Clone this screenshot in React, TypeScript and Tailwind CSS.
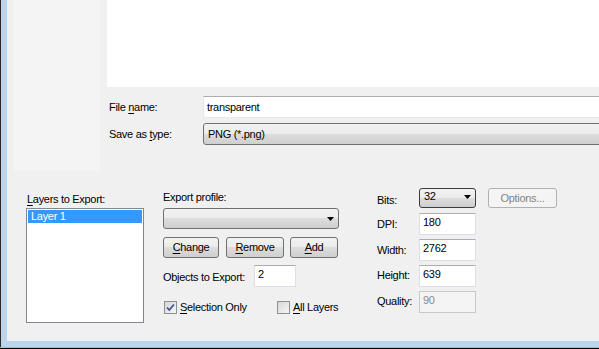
import React from "react";

const btnBg =
  "bg-[linear-gradient(#f2f2f2_0%,#ebebeb_50%,#dddddd_50%,#cfcfcf_100%)]";

function Arrow() {
  return (
    <svg width="7" height="4" viewBox="0 0 7 4" className="block">
      <path d="M0 0H7L3.5 4Z" fill="#000" />
    </svg>
  );
}

function U({ children }: { children: React.ReactNode }) {
  return <span className="underline underline-offset-[2px]">{children}</span>;
}

function Check({ checked }: { checked: boolean }) {
  return (
    <div className="w-[13px] h-[13px] border border-[#8e8f8f] bg-[linear-gradient(135deg,#d6d6d6_0%,#f6f6f6_100%)] flex items-center justify-center shrink-0">
      {checked && (
        <svg width="9" height="9" viewBox="0 0 9 9">
          <path d="M1 4.5L3.3 7L8 1.5" stroke="#3d5590" strokeWidth="1.8" fill="none" />
        </svg>
      )}
    </div>
  );
}

function TextBox({ value, w, disabled }: { value: string; w: string; disabled?: boolean }) {
  return (
    <div
      className={`${w} h-[22px] border ${
        disabled
          ? "border-[#c9c9c9] bg-[#f4f4f4] text-[#8a8a8a]"
          : "border-[#dcdfe6] border-t-[#abadb3] bg-white text-black"
      } pl-[3px] pt-[2px]`}
    >
      {value}
    </div>
  );
}

export default function App() {
  return (
    <div className="w-[599px] h-[349px] flex flex-col bg-[#f0f0f0] overflow-hidden font-['Liberation_Sans',Arial,sans-serif] text-[11px] leading-[13px] tracking-[-0.3px] text-black">
      <div className="flex flex-1 min-h-0">
        <div className="w-px bg-[#2a2a2a]" />
        <div className="w-[6px] bg-[#bcd4ec]" />
        <div className="flex-1 flex flex-col min-w-0">
          {/* top section */}
          <div className="h-[171px] flex">
            <div className="w-[7px]" />
            <div className="w-[86px] bg-[#f4f4f4]" />
            <div className="w-[7px]" />
            <div className="flex-1 flex flex-col min-w-0">
              <div className="h-[87px] bg-white" />
              <div className="mt-[9px] h-[22px] flex items-center">
                <div className="w-[96px] pl-[2px] shrink-0">
                  File <U>n</U>ame:
                </div>
                <div className="flex-1 h-[22px] -mr-[4px] border border-[#e3e9ef] border-t-[#abadb3] bg-white pl-[3px] flex items-center">
                  transparent
                </div>
              </div>
              <div className="mt-[5px] h-[22px] flex items-center">
                <div className="w-[96px] pl-[2px] shrink-0">
                  Save as <U>t</U>ype:
                </div>
                <div className={`flex-1 h-[22px] -mr-[4px] border border-[#707070] rounded-[3px] ${btnBg} pl-[4px] flex items-center`}>
                  PNG (*.png)
                </div>
              </div>
            </div>
          </div>

          {/* lower section */}
          <div className="flex items-start pl-[19px]">
            {/* col1 */}
            <div className="w-[118px] pt-[22px] shrink-0">
              <div className="h-[13px] pl-px">
                <U>L</U>ayers to Export:
              </div>
              <div className="mt-[2px] h-[115px] border border-[#828790] bg-white p-px">
                <div className="h-[13px] bg-[#3399ff] text-white pl-[3px]">Layer 1</div>
              </div>
            </div>

            {/* col2 */}
            <div className="ml-[19px] w-[176px] pt-[20px] shrink-0">
              <div className="h-[13px]">Export profile:</div>
              <div className={`mt-[4px] h-[21px] border border-[#707070] rounded-[3px] ${btnBg} flex items-center justify-end pr-[4px]`}>
                <Arrow />
              </div>
              <div className="mt-[8px] flex">
                <div className={`w-[56px] h-[21px] border border-[#707070] rounded-[3px] ${btnBg} flex items-center justify-center`}>
                  <span><U>C</U>hange</span>
                </div>
                <div className={`ml-[7px] w-[58px] h-[21px] border border-[#707070] rounded-[3px] ${btnBg} flex items-center justify-center`}>
                  <span><U>R</U>emove</span>
                </div>
                <div className={`ml-[6px] w-[48px] h-[21px] border border-[#707070] rounded-[3px] ${btnBg} flex items-center justify-center`}>
                  <span><U>A</U>dd</span>
                </div>
              </div>
              <div className="mt-[7px] h-[22px] flex">
                <div className="w-[91px] pt-[6px]">Objects to Export:</div>
                <TextBox value="2" w="w-[42px]" />
              </div>
              <div className="mt-[14px] h-[13px] flex items-center whitespace-nowrap">
                <div className="w-[114px] shrink-0 flex items-center pl-px">
                  <Check checked />
                  <span className="ml-[3px]">
                    <U>S</U>election Only
                  </span>
                </div>
                <Check checked={false} />
                <span className="ml-[3px]">
                  <U>A</U>ll Layers
                </span>
              </div>
            </div>

            {/* col3 */}
            <div className="ml-[38px] pt-[17px] shrink-0">
              <div className="h-[20px] flex">
                <div className="w-[42px] pt-[6px]">Bits:</div>
                <div className={`w-[57px] h-[20px] border border-[#3c3c3c] rounded-[3px] ${btnBg} flex items-start justify-between pl-[4px] pr-[4px] pt-[1px]`}>
                  <span>32</span>
                  <span className="mt-[5px]">
                    <Arrow />
                  </span>
                </div>
              </div>
              <div className="mt-[5px] h-[22px] flex">
                <div className="w-[42px] pt-[5px]">DPI:</div>
                <TextBox value="180" w="w-[57px]" />
              </div>
              <div className="mt-[4px] h-[22px] flex">
                <div className="w-[42px] pt-[5px]">Width:</div>
                <TextBox value="2762" w="w-[57px]" />
              </div>
              <div className="mt-[4px] h-[22px] flex">
                <div className="w-[42px] pt-[4px]">Height:</div>
                <TextBox value="639" w="w-[57px]" />
              </div>
              <div className="mt-[4px] h-[22px] flex">
                <div className="w-[42px] pt-[4px]">Quality:</div>
                <TextBox value="90" w="w-[57px]" disabled />
              </div>
            </div>

            {/* col4 */}
            <div className="ml-[12px] pt-[17px] shrink-0">
              <div className="w-[69px] h-[20px] border border-[#adb2b5] rounded-[3px] bg-[#f4f4f4] text-[#838383] flex items-center justify-center">
                Options...
              </div>
            </div>
          </div>
        </div>
      </div>
      <div className="h-[6px] flex">
        <div className="w-px bg-[#2a2a2a]" />
        <div className="flex-1 bg-[#bcd4ec]" />
      </div>
      <div className="h-px bg-[#74d0ea]" />
      <div className="h-px bg-black" />
    </div>
  );
}
